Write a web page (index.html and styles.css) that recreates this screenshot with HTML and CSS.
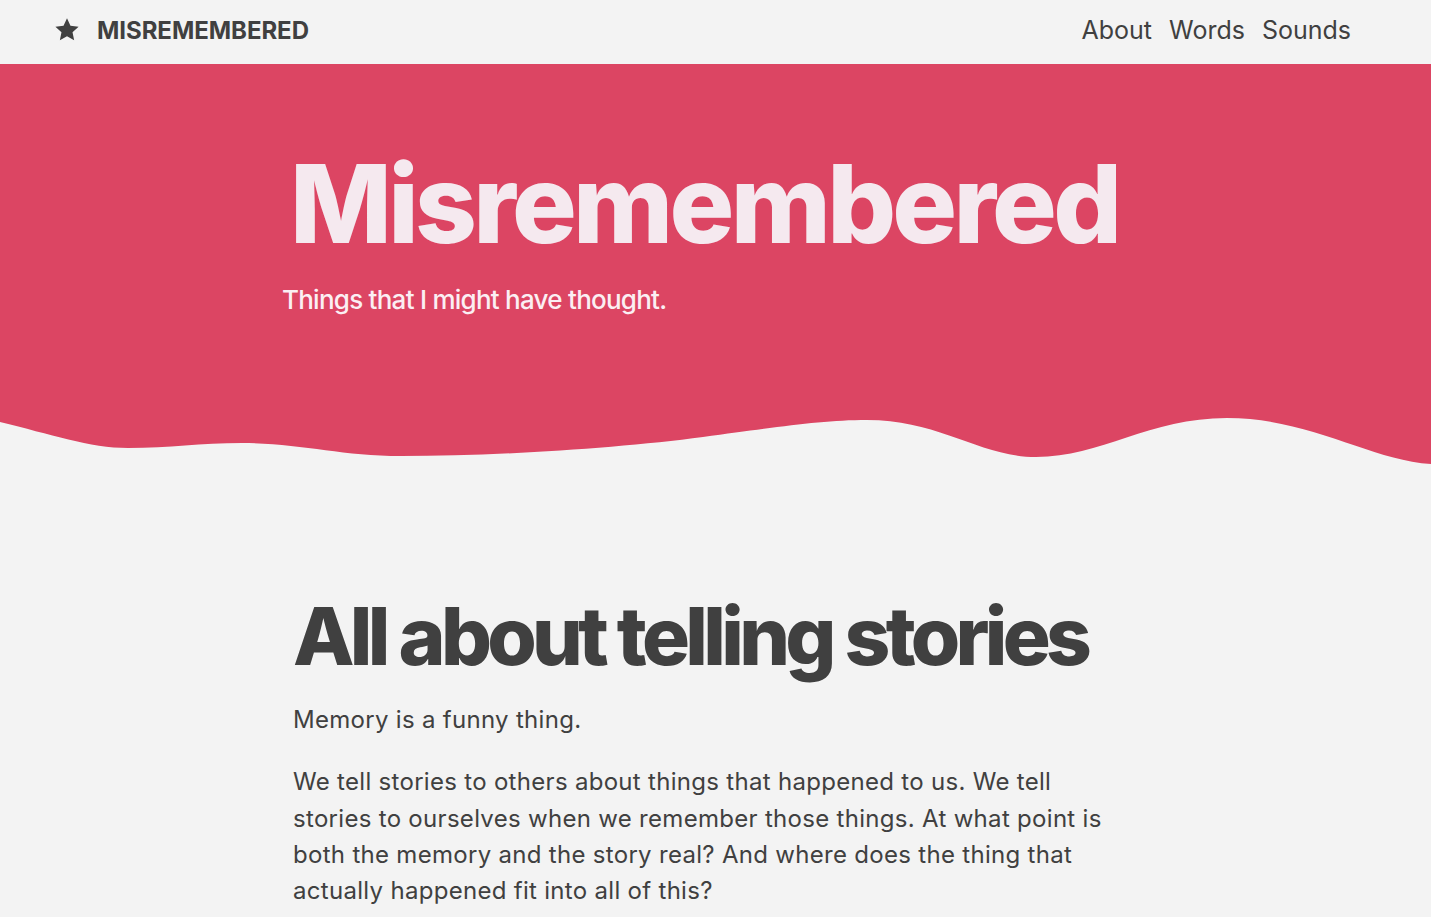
FILE: index.html
```html
<!DOCTYPE html>
<html lang="en">
<head>
<meta charset="utf-8">
<title>Misremembered</title>
<link rel="stylesheet" href="styles.css">
</head>
<body>
<header class="site-header">
  <a class="brand" href="#">
    <svg class="brand-star" viewBox="0 0 24 24" aria-hidden="true"><path d="M12 1.2l3.2 6.9 7.5.9-5.6 5.1 1.5 7.4L12 17.8l-6.6 3.7 1.5-7.4L1.3 9l7.5-.9z"/></svg>
    <span class="brand-name">MISREMEMBERED</span>
  </a>
  <nav class="site-nav">
    <a href="#">About</a>
    <a href="#">Words</a>
    <a href="#">Sounds</a>
  </nav>
</header>

<section class="hero">
  <div class="hero-inner">
    <h1 class="hero-title">Misremembered</h1>
    <p class="hero-sub">Things that I might have thought.</p>
  </div>
</section>
<svg class="wave" viewBox="0 0 1431 60" preserveAspectRatio="none" aria-hidden="true">
  <path d="M0,0 V12 C50,24 90,38 128,38 C170,38 200,33 242,33 C300,33 340,46 401,46 C500,46 620,38 703,27 C780,17 820,10 867,10 C940,10 980,47 1036,47 C1100,47 1150,8 1227,8 C1310,8 1370,50 1431,54 V0 Z"/>
</svg>

<main class="content">
  <h2 class="content-title">All about telling stories</h2>
  <p>Memory is a funny thing.</p>
  <p>We tell stories to others about things that happened to us. We tell stories to ourselves when we remember those things. At what point is both the memory and the story real? And where does the thing that actually happened fit into all of this?</p>
</main>
</body>
</html>
```

FILE: styles.css
```css
* { box-sizing: border-box; }

html, body {
  margin: 0;
  padding: 0;
  background: #f3f3f3;
  color: #404040;
  font-family: "Inter", "Liberation Sans", sans-serif;
}

a { color: inherit; text-decoration: none; }

.site-header {
  height: 64px;
  display: flex;
  align-items: center;
  justify-content: space-between;
  padding: 0 80px 4px 54px;
}

.brand {
  display: flex;
  align-items: center;
  gap: 17px;
}

.brand-star {
  width: 26px;
  height: 26px;
  fill: #404040;
}

.brand-name {
  font-size: 24px;
  font-weight: 700;
  letter-spacing: -0.05px;
}

.site-nav {
  display: flex;
  gap: 17px;
  font-size: 25px;
}

.hero {
  background: #dc4563;
  height: 346px;
  padding-top: 86px;
}

.hero-inner {
  width: 867px;
  margin: 0 auto;
}

.hero-title {
  margin: 0 0 0 8px;
  font-size: 108px;
  line-height: 1;
  font-weight: 800;
  letter-spacing: -3.7px;
  color: #f5e9ef;
}

.hero-sub {
  margin: 26px 0 0;
  font-size: 26px;
  font-weight: 500;
  letter-spacing: -0.75px;
  color: #fbeff3;
}

.wave {
  display: block;
  width: 100%;
  height: 60px;
  fill: #dc4563;
}

.content {
  width: 845px;
  margin: 0 auto;
  padding-top: 126px;
}

.content-title {
  margin: 0 0 26px;
  font-size: 80px;
  line-height: 1;
  font-weight: 800;
  letter-spacing: -4.7px;
  color: #404040;
}

.content p {
  max-width: 820px;
  margin: 0 0 26px;
  font-size: 24px;
  line-height: 36.3px;
  letter-spacing: 0.3px;
}
```
